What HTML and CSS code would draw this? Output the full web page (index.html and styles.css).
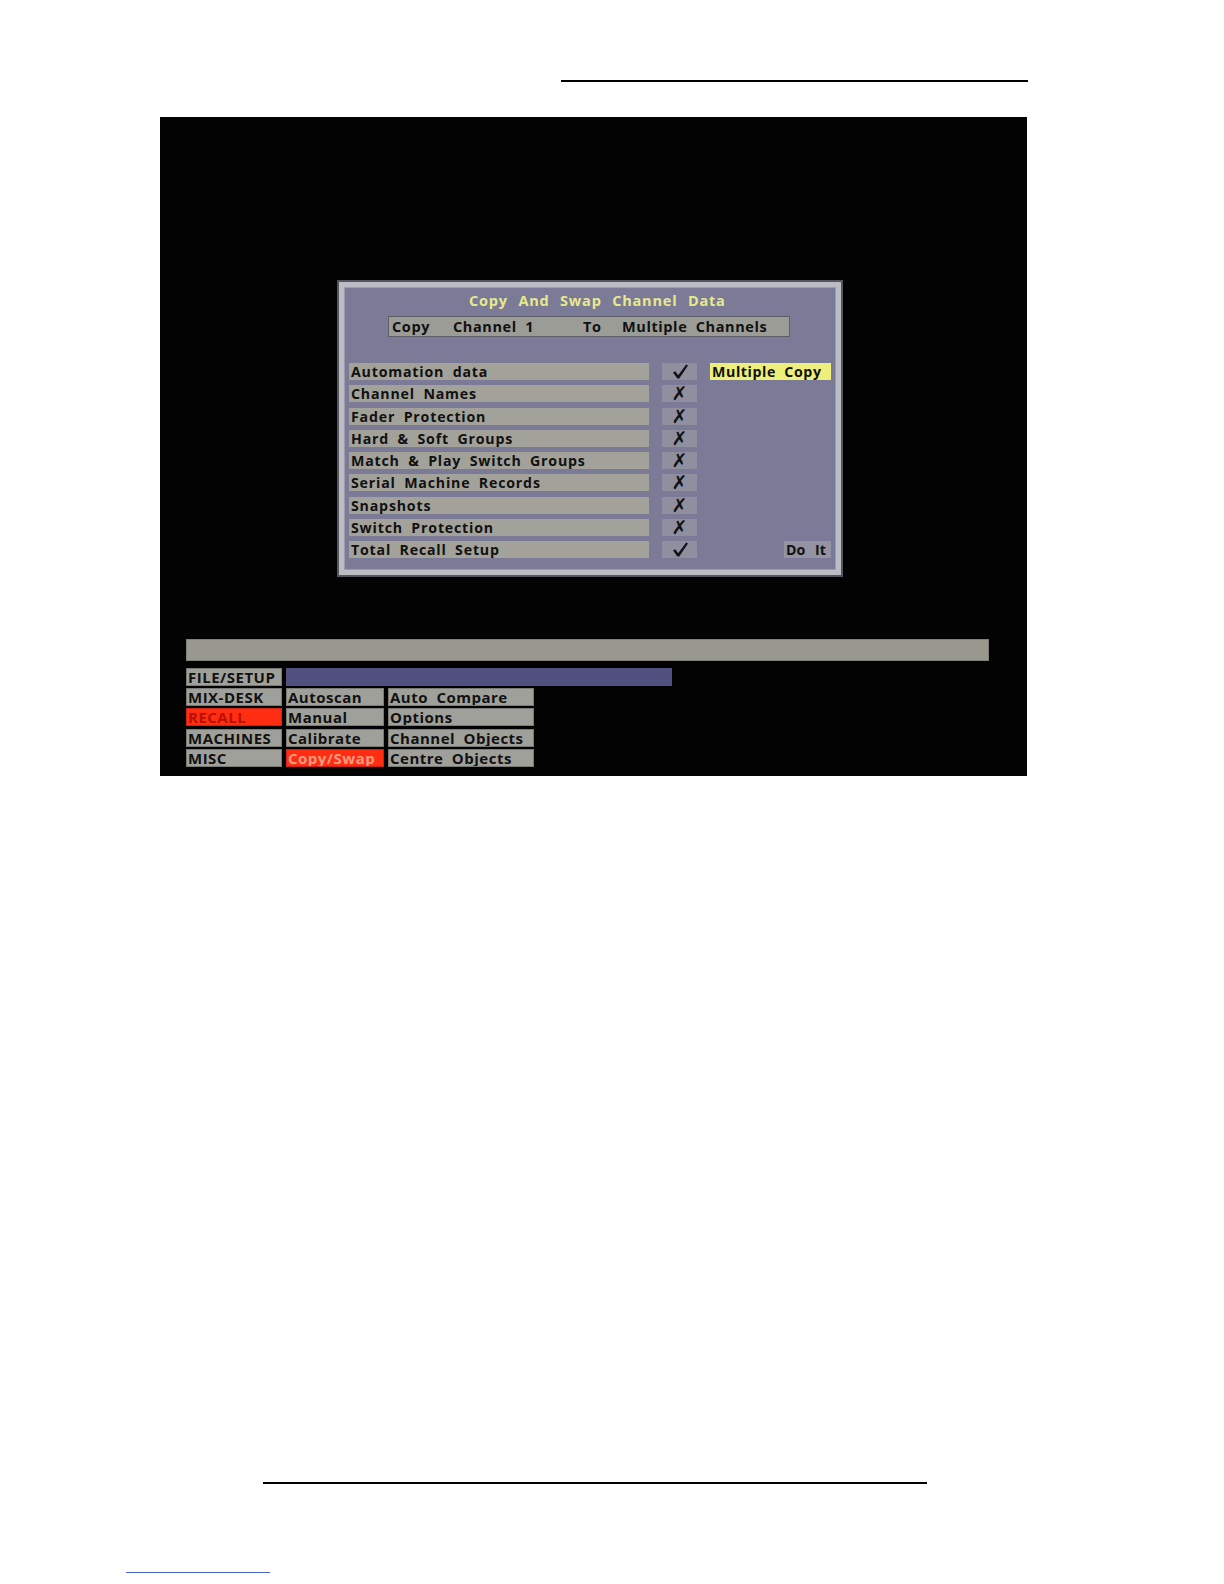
FILE: index.html
```html
<!DOCTYPE html>
<html>
<head>
<meta charset="utf-8">
<link rel="stylesheet" href="styles.css">
</head>
<body>
<div class="page">
  <div class="top-rule"></div>
  <div class="screen">
    <div class="dialog">
      <div class="title">Copy And Swap Channel Data</div>
      <div class="subtitle"><span class="s1">Copy</span><span class="s2">Channel 1</span><span class="s3">To</span><span class="s4">Multiple Channels</span></div>
      <div class="rows">
        <div class="label">Automation data</div><div class="check"><svg class="tick" viewBox="0 0 16 15" width="16" height="15"><polygon points="1,8.5 3.2,7.2 6.2,11.2 14.2,0.5 16,1.6 7.2,14.5 5.4,14.5"/></svg></div><div class="side yellow">Multiple Copy</div>
        <div class="label">Channel Names</div><div class="check">✗</div><div class="side"></div>
        <div class="label">Fader Protection</div><div class="check">✗</div><div class="side"></div>
        <div class="label">Hard &amp; Soft Groups</div><div class="check">✗</div><div class="side"></div>
        <div class="label">Match &amp; Play Switch Groups</div><div class="check">✗</div><div class="side"></div>
        <div class="label">Serial Machine Records</div><div class="check">✗</div><div class="side"></div>
        <div class="label">Snapshots</div><div class="check">✗</div><div class="side"></div>
        <div class="label">Switch Protection</div><div class="check">✗</div><div class="side"></div>
        <div class="label">Total Recall Setup</div><div class="check"><svg class="tick" viewBox="0 0 16 15" width="16" height="15"><polygon points="1,8.5 3.2,7.2 6.2,11.2 14.2,0.5 16,1.6 7.2,14.5 5.4,14.5"/></svg></div><div class="side"><span class="doit">Do It</span></div>
      </div>
    </div>
    <div class="status-bar"></div>
    <div class="menu">
      <div class="item">FILE/SETUP</div><div class="purple"></div>
      <div class="item">MIX-DESK</div><div class="item">Autoscan</div><div class="item">Auto Compare</div>
      <div class="item red dark">RECALL</div><div class="item">Manual</div><div class="item">Options</div>
      <div class="item">MACHINES</div><div class="item">Calibrate</div><div class="item">Channel Objects</div>
      <div class="item">MISC</div><div class="item red light">Copy/Swap</div><div class="item">Centre Objects</div>
    </div>
  </div>
  <div class="bottom-rule"></div>
  <div class="link-rule"></div>
</div>
</body>
</html>
```

FILE: styles.css
```css
html, body {
  margin: 0;
  padding: 0;
  background: #ffffff;
}
.page {
  width: 1224px;
  height: 1584px;
  overflow: hidden;
  display: flex;
  flex-direction: column;
  font-family: "Open Sans", "DejaVu Sans", sans-serif;
}
.top-rule {
  margin-top: 80px;
  margin-left: 561px;
  width: 467px;
  height: 2px;
  background: #000;
}
.screen {
  margin-top: 35px;
  margin-left: 160px;
  width: 867px;
  height: 659px;
  background: #030303;
  display: flex;
  flex-direction: column;
}
.dialog {
  margin-top: 165px;
  margin-left: 179px;
  width: 492px;
  height: 283px;
  background: #7b7b97;
  border: 5px solid #bcbcc4;
  box-shadow: 0 0 0 2px #55555f, inset 0 0 0 1px #9c9cac;
  display: flex;
  flex-direction: column;
  align-items: flex-start;
}
.title {
  margin-top: 5px;
  margin-left: 125px;
  height: 18px;
  line-height: 18px;
  color: #e8e88c;
  font-weight: 700;
  font-size: 14.5px;
  letter-spacing: 0.8px;
  word-spacing: 6px;
  white-space: nowrap;
}
.subtitle {
  margin-top: 6px;
  margin-left: 44px;
  width: 402px;
  height: 21px;
  box-sizing: border-box;
  background: #9c9c96;
  border: 1px solid #5e5e66;
  display: flex;
  align-items: center;
  font-weight: 700;
  font-size: 14.5px;
  letter-spacing: 0.6px;
  word-spacing: 4px;
  color: #111;
}
.subtitle span { white-space: nowrap; }
.s1 { margin-left: 3px; width: 61px; }
.s2 { width: 130px; }
.s3 { width: 39px; }
.rows {
  margin-top: 26px;
  margin-left: 5px;
  display: grid;
  grid-template-columns: 300px 35px 121px;
  column-gap: 13px;
  row-gap: 5.25px;
  grid-auto-rows: 17px;
}
.label {
  background: #a2a29a;
  color: #111;
  font-weight: 700;
  font-size: 14.2px;
  line-height: 17px;
  padding-left: 2px;
  letter-spacing: 0.8px;
  word-spacing: 4px;
  white-space: nowrap;
}
.check {
  background: #8f8f9f;
  color: #111;
  text-align: center;
  font-family: "DejaVu Sans", sans-serif;
  font-size: 19px;
  line-height: 17px;
  font-weight: 700;
  display: flex;
  align-items: center;
  justify-content: center;
}
.tick {
  fill: #111;
  display: block;
}
.side {
  display: flex;
  justify-content: flex-end;
}
.yellow {
  background: #eeee7a;
  color: #111;
  font-weight: 700;
  font-size: 14.2px;
  line-height: 17px;
  padding-left: 2px;
  justify-content: flex-start;
  letter-spacing: 0.6px;
  word-spacing: 4px;
  white-space: nowrap;
}
.doit {
  background: #9393a3;
  color: #111;
  font-weight: 700;
  font-size: 14.2px;
  line-height: 17px;
  width: 47px;
  padding-left: 2px;
  box-sizing: border-box;
  word-spacing: 6px;
  white-space: nowrap;
}
.status-bar {
  margin-top: 64px;
  margin-left: 26px;
  width: 803px;
  height: 22px;
  background: #98988f;
  box-sizing: border-box;
  border: 1px solid #80807a;
}
.menu {
  margin-top: 7px;
  margin-left: 26px;
  display: grid;
  grid-template-columns: 96px 98px 146px;
  column-gap: 4px;
  row-gap: 2.2px;
  grid-auto-rows: 18px;
}
.item {
  background: #a0a09a;
  border: 1px solid #7a7a76;
  box-sizing: border-box;
  color: #111;
  font-weight: 700;
  font-size: 15px;
  line-height: 16px;
  padding-left: 1px;
  letter-spacing: 0.5px;
  word-spacing: 4px;
  white-space: nowrap;
  overflow: hidden;
}
.purple {
  grid-column: 2 / span 2;
  width: 386px;
  height: 18px;
  background: #52507e;
}
.red {
  background: #ff2e12;
  border-color: #d02010;
}
.red.dark { color: #b81000; }
.red.light { color: #ff9a80; }
.bottom-rule {
  margin-top: 706px;
  margin-left: 263px;
  width: 664px;
  height: 2px;
  background: #000;
}
.link-rule {
  margin-top: 88px;
  margin-left: 126px;
  width: 144px;
  height: 1px;
  background: #4a64c8;
}
```
